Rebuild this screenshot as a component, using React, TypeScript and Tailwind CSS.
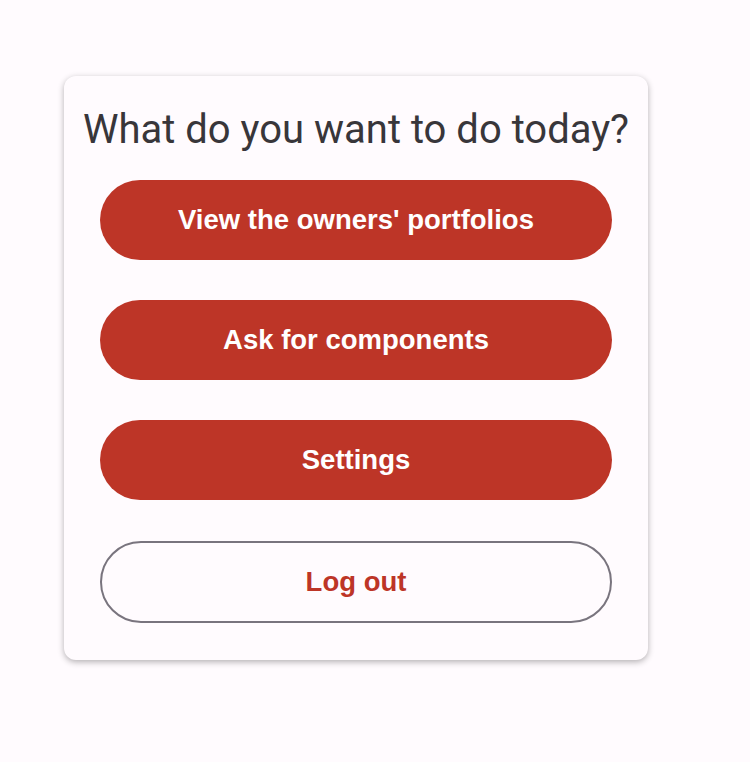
import React from 'react';

const actions = ["View the owners' portfolios", 'Ask for components', 'Settings'];

export default function App() {
    return (
        <div className="min-h-[762px] w-full bg-[#fffbfe] pl-16 pt-[76px]">
            <div className="flex w-[584px] flex-col items-center rounded-xl bg-[#fffbfe] pb-[37px] pt-6 shadow-[0_2px_6px_rgba(0,0,0,0.3)]">
                <h1 className="whitespace-nowrap font-['Roboto',sans-serif] text-[40px] leading-[60px] text-[#38363a]">
                    What do you want to do today?
                </h1>
                <div className="mt-5 flex w-[512px] flex-col gap-10">
                    {actions.map((label) => (
                        <button
                            className="h-20 w-full rounded-full bg-[#bd3527] font-['Liberation_Sans',sans-serif] text-[27.5px] font-bold text-white"
                            key={label}
                        >
                            {label}
                        </button>
                    ))}
                    <button className="mt-px h-[82px] w-full rounded-full border-2 border-[#79747e] font-['Liberation_Sans',sans-serif] text-[27.5px] font-bold text-[#bd3527]">
                        Log out
                    </button>
                </div>
            </div>
        </div>
    );
}
